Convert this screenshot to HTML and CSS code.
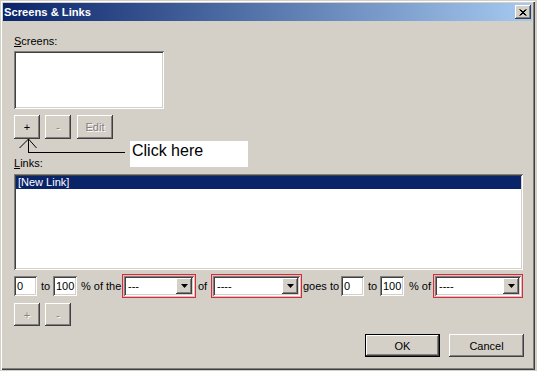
FILE: index.html
```html
<!DOCTYPE html>
<html>
<head>
<meta charset="utf-8">
<title>Screens &amp; Links</title>
<link rel="stylesheet" href="styles.css">
</head>
<body>
<div class="window">
  <div class="titlebar">
    <span class="title">Screens &amp; Links</span>
    <span class="close raised"><svg width="8" height="7" viewBox="0 0 8 7"><path d="M0.5 0.5L6.5 6.5M1.5 0.5L7.5 6.5M6.5 0.5L0.5 6.5M7.5 0.5L1.5 6.5" stroke="#000" stroke-width="1" fill="none"/></svg></span>
  </div>
  <div class="content">
    <div class="label first"><span class="ul">S</span>creens:</div>
    <div class="list screens sunken"></div>
    <div class="btnrow">
      <div class="btn raised sq">+</div>
      <div class="btn raised sq dis">-</div>
      <div class="btn raised edit dis">Edit</div>
    </div>
    <div class="label links-label"><span class="ul">L</span>inks:</div>
    <div class="list links sunken"><div class="item sel">[New Link]</div></div>
    <div class="maprow">
      <div class="field sunken w23">0</div>
      <span class="txt t1">to</span>
      <div class="field sunken w24">100</div>
      <span class="txt t2">% of the</span>
      <div class="hl s1"><div class="combo sunken"><span class="val">---</span><span class="dd raised"><svg width="7" height="4" viewBox="0 0 7 4"><path d="M0 0H7L3.5 4Z" fill="#000"/></svg></span></div></div>
      <span class="txt t3">of</span>
      <div class="hl s2"><div class="combo sunken"><span class="val">----</span><span class="dd raised"><svg width="7" height="4" viewBox="0 0 7 4"><path d="M0 0H7L3.5 4Z" fill="#000"/></svg></span></div></div>
      <span class="txt t4">goes to</span>
      <div class="field sunken w23">0</div>
      <span class="txt t5">to</span>
      <div class="field sunken w24">100</div>
      <span class="txt t6">% of</span>
      <div class="hl s3"><div class="combo sunken"><span class="val">----</span><span class="dd raised"><svg width="7" height="4" viewBox="0 0 7 4"><path d="M0 0H7L3.5 4Z" fill="#000"/></svg></span></div></div>
    </div>
    <div class="btnrow2">
      <div class="btn raised sq2 dis">+</div>
      <div class="btn raised sq2 dis">-</div>
    </div>
    <div class="okrow">
      <div class="btn default"><div class="btn-in raised">OK</div></div>
      <div class="btn raised wide">Cancel</div>
    </div>
  </div>
  <svg class="arrow" width="110" height="17" viewBox="0 0 110 17">
    <path d="M10.5 1L1.5 10M10.5 1L18.5 10" stroke="#000" stroke-width="1" fill="none"/>
    <path d="M10.5 1V14.5H107" stroke="#000" stroke-width="1" fill="none" shape-rendering="crispEdges"/>
  </svg>
  <div class="callout">Click here</div>
</div>
</body>
</html>
```
FILE: styles.css
```css
* { box-sizing: border-box; }
html, body { margin: 0; padding: 0; }
body {
  width: 537px;
  height: 371px;
  overflow: hidden;
  background: #d4d0c8;
  font: 11px "Liberation Sans", Arial, sans-serif;
  color: #000;
}
.raised {
  background: #d4d0c8;
  box-shadow: inset -1px -1px #404040, inset 1px 1px #ffffff, inset -2px -2px #808080, inset 2px 2px #d4d0c8;
}
.sunken {
  background: #ffffff;
  box-shadow: inset 1px 1px #808080, inset -1px -1px #ffffff, inset 2px 2px #404040, inset -2px -2px #d4d0c8;
}
.window {
  position: relative;
  width: 535px;
  height: 370px;
  padding: 3px;
  background: #d4d0c8;
  box-shadow: inset 1px 1px #d4d0c8, inset 2px 2px #ffffff, inset -1px -1px #404040, inset -2px -2px #808080;
}
.titlebar {
  height: 18px;
  display: flex;
  align-items: center;
  justify-content: space-between;
  padding: 0 1px 0 1px;
  background: linear-gradient(to right, #0a246a, #a6caf0);
}
.title {
  color: #fff;
  font-weight: bold;
  font-size: 11.2px;
}
.close {
  width: 16px;
  height: 14px;
  display: flex;
  align-items: center;
  justify-content: center;
  padding-top: 1px;
}
.close svg { display: block; }
.content {
  padding-left: 11px;
  padding-right: 8px;
}
.label {
  height: 13px;
  line-height: 13px;
}
.label.first { margin-top: 14px; }
.ul { text-decoration: underline; }
.list { }
.screens {
  width: 150px;
  height: 58px;
  margin-top: 3px;
}
.btnrow {
  display: flex;
  margin-top: 6px;
  height: 24px;
}
.btn {
  display: flex;
  align-items: center;
  justify-content: center;
  height: 100%;
}
.sq { width: 26px; margin-right: 5px; }
.sq + .sq { margin-right: 6px; }
.edit { width: 36px; }
.dis {
  color: #808080;
  text-shadow: 1px 1px #ffffff;
}
.links-label { margin-top: 18px; }
.links {
  width: 509px;
  height: 96px;
  margin-top: 4px;
  padding: 2px;
}
.item {
  height: 13px;
  line-height: 13px;
  padding-left: 2px;
}
.item.sel {
  background: #0a246a;
  color: #fff;
}
.maprow {
  display: flex;
  align-items: center;
  height: 24px;
  margin-top: 4px;
}
.field {
  height: 20px;
  line-height: 20px;
  padding-left: 3px;
  white-space: nowrap;
}
.w23 { width: 23px; }
.w24 { width: 24px; }
.txt { white-space: nowrap; }
.t1 { width: 16px; padding-left: 4px; }
.t2 { width: 45px; padding-left: 4px; }
.t3 { width: 15px; padding-left: 2px; }
.t4 { width: 39px; padding-left: 1px; }
.t5 { width: 16px; padding-left: 4px; }
.t6 { width: 29px; padding-left: 5px; }
.hl {
  height: 24px;
  border: 1px solid #c8323c;
  padding: 1px;
  background: #f2b4b8;
}
.s1 { width: 74px; }
.s2 { width: 91px; }
.s3 { width: 90px; }
.combo {
  height: 20px;
  display: flex;
  align-items: center;
  padding: 2px;
}
.val {
  flex: 1;
  padding-left: 2px;
  line-height: 16px;
}
.dd {
  width: 16px;
  height: 16px;
  display: flex;
  align-items: center;
  justify-content: center;
}
.dd svg { display: block; }
.btnrow2 {
  display: flex;
  height: 23px;
  margin-top: 5px;
}
.sq2 { width: 26px; margin-right: 5px; }
.okrow {
  display: flex;
  justify-content: flex-end;
  height: 23px;
  margin-top: 8px;
}
.default {
  width: 75px;
  border: 1px solid #000;
  margin-right: 9px;
}
.btn-in {
  width: 100%;
  height: 100%;
  display: flex;
  align-items: center;
  justify-content: center;
}
.wide { width: 75px; }
.arrow {
  position: absolute;
  left: 18px;
  top: 138px;
  display: block;
}
.callout {
  position: absolute;
  left: 130px;
  top: 141px;
  width: 118px;
  height: 26px;
  background: #fff;
  font-size: 16px;
  line-height: 18px;
  padding: 1px 2px;
}
```
